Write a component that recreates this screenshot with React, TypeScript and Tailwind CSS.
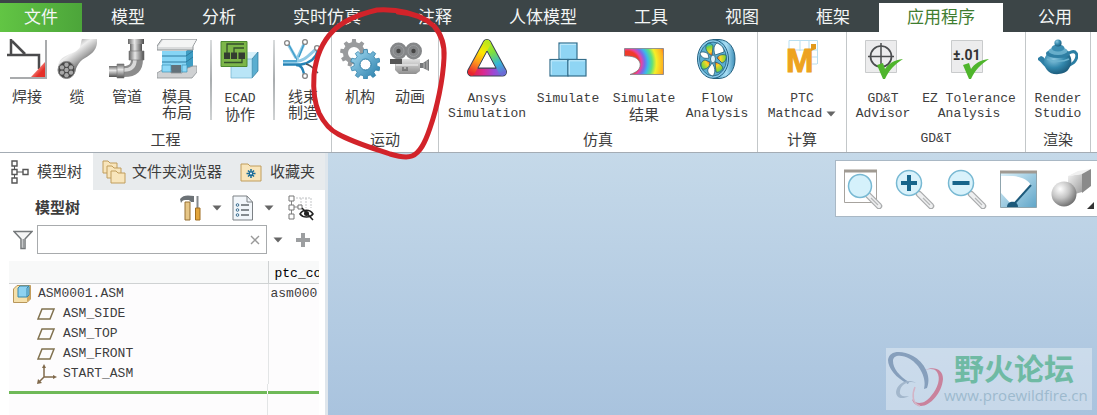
import React from "react";

const Svg = ({ children, className = "size-10", box = "0 0 40 40" }: { children: React.ReactNode; className?: string; box?: string }) => (
  <svg viewBox={box} className={`shrink-0 ${className}`} fill="none" aria-hidden="true">
    {children}
  </svg>
);

const gearPath = (cx: number, cy: number, outer: number, inner: number, teeth: number) => {
  const pts: string[] = [];
  for (let i = 0; i < teeth; i++) {
    const a = (i / teeth) * Math.PI * 2 - Math.PI / 2;
    const s = (Math.PI * 2) / teeth;
    [
      [-0.3, inner],
      [-0.19, outer],
      [0.19, outer],
      [0.3, inner],
    ].forEach(([o, r]) => {
      pts.push(`${(cx + Math.cos(a + o * s) * r).toFixed(2)},${(cy + Math.sin(a + o * s) * r).toFixed(2)}`);
    });
  }
  return `M${pts.join("L")}Z`;
};

const WeldIcon = () => (
  <Svg>
    <defs>
      <linearGradient id="weld" x1="0" y1="0" x2="1" y2="1">
        <stop offset="0.3" stopColor="#f7a49c" />
        <stop offset="0.7" stopColor="#e52f28" />
      </linearGradient>
    </defs>
    <path d="M39 1V39H3" stroke="#a9abad" strokeWidth="2" />
    <path d="M4 0V15M0 16H32V30M5 2L18 15" stroke="#4b4b4d" strokeWidth="2.5" />
    <path d="M24 38L38 23V38Z" fill="url(#weld)" />
  </Svg>
);

const CableIcon = () => (
  <Svg>
    <defs>
      <linearGradient id="cable" x1="0.2" y1="0.1" x2="0.75" y2="0.75">
        <stop stopColor="#777" />
        <stop offset="0.4" stopColor="#eee" />
        <stop offset="0.7" stopColor="#a9a9a9" />
        <stop offset="1" stopColor="#555" />
      </linearGradient>
    </defs>
    <path d="M1 28C2 14 18 17 23 8C24 5 24 2 25 0H40C41 10 35 15 28 19C21 23 19 29 18 34Z" fill="url(#cable)" />
    <circle cx="9.5" cy="31" r="8.5" fill="#474747" stroke="#868686" />
    {[[9.5, 31], [9.5, 25.8], [9.5, 36.2], [5, 28.4], [14, 28.4], [5, 33.6], [14, 33.6]].map(([x, y]) => (
      <circle key={`${x}-${y}`} cx={x} cy={y} r="2.2" fill="#a8a8a8" />
    ))}
  </Svg>
);

const PipeIcon = () => (
  <Svg>
    <defs>
      <linearGradient id="pipeV"><stop stopColor="#666" /><stop offset="0.4" stopColor="#e6e6e6" /><stop offset="1" stopColor="#4e4e4e" /></linearGradient>
      <linearGradient id="pipeH" x1="0" y1="0" x2="0" y2="1"><stop stopColor="#6a6a6a" /><stop offset="0.4" stopColor="#e6e6e6" /><stop offset="1" stopColor="#4e4e4e" /></linearGradient>
    </defs>
    <path d="M23 3H35V13H23Z" fill="url(#pipeV)" />
    <path d="M2 27H12V38H2Z" fill="url(#pipeH)" />
    <path d="M17 27C22 27 24 25 24 20H36C36 32 30 38 17 38Z" fill="#8c8c8c" />
    <path d="M17 31C25 31 28 27 28 20" stroke="#d9d9d9" strokeWidth="3.5" />
    <path d="M21 0H37V5H21Z" fill="url(#pipeV)" />
    <path d="M22 12H37V21H22Z" fill="url(#pipeV)" stroke="#777" strokeWidth="0.6" />
    <path d="M10 25H17V39H10Z" fill="url(#pipeH)" stroke="#777" strokeWidth="0.6" />
  </Svg>
);

const MoldIcon = () => (
  <Svg>
    <path d="M5 12H36V29H31V19H5Z" fill="#4fb0d6" />
    <path d="M5 12H29V34H5Z" fill="#86d5f5" />
    <path d="M29 12L36 7V29L29 34Z" fill="#3e9dc4" />
    <path d="M5 17H29L36 12M5 23H29L36 18" stroke="#2c7ba0" />
    <path d="M14 26H24V34H14Z" fill="#62717a" />
    <path d="M0 7L5 0H40L36 7V11H0Z" fill="#d9dbdc" stroke="#8d9295" />
    <path d="M1 8L6 1H39L35 8Z" fill="#f3f4f4" />
    <path d="M0 34L5 31H14V34H25V31L36 27H40V33L35 39H0Z" fill="#cfd1d3" stroke="#8d9295" strokeWidth="0.8" />
    <path d="M5 26H14V33H5ZM25 26H30V33H25Z" fill="#8ed9f8" stroke="#3e93b8" strokeWidth="0.7" />
  </Svg>
);

const EcadIcon = () => (
  <Svg>
    <path d="M11 20L18 13H38L32 20Z" fill="#d8f1fb" />
    <path d="M32 20L38 13V32L32 39Z" fill="#5aaed0" stroke="#2c7798" strokeWidth="0.7" />
    <path d="M11 20H32V39H11Z" fill="#b9e5f7" stroke="#6db0cb" strokeWidth="0.7" />
    <path d="M1 2.5H27V27.5H1Z" fill="#7cb648" stroke="#4d8a30" />
    <path d="M4 13.5H10V20H4ZM11 13.5H17V20H11ZM18.5 13.5H25V20H18.5Z" fill="#333c30" />
    <path d="M7 14V5H24M14 14V9H24M4 23.5H22V20" stroke="#34502c" strokeWidth="1.3" />
  </Svg>
);

const HarnessIcon = () => (
  <Svg>
    <path d="M0 22.5H13C21 22 25 17 33 10M5 5L13 19M21 5L14 20" stroke="#8fcae6" strokeWidth="3" />
    <path d="M0 25.5H18C27 24 33 19 35 11M13 26C19 26 20 31 21 35" stroke="#2583b5" strokeWidth="2.5" />
    <path d="M6 6L14 21M21 5L16 18M0 22H14" stroke="#3c9cca" strokeWidth="1.3" />
    <path d="M23 25C28 26 30 29 35 34" stroke="#555" strokeWidth="1.5" />
    {[[4, 4], [22, 3], [34, 9], [22, 37]].map(([x, y]) => (
      <circle key={x + y} cx={x} cy={y} r="2.4" fill="#fff" stroke="#888" strokeWidth="1.4" />
    ))}
  </Svg>
);

const GearsIcon = () => (
  <Svg>
    <defs>
      <linearGradient id="gear" x1="0" y1="0" x2="1" y2="1"><stop stopColor="#a7dcf3" /><stop offset="1" stopColor="#247ba8" /></linearGradient>
    </defs>
    <path fillRule="evenodd" d={`${gearPath(14, 14, 14, 11, 9)}M14 8A6 6 0 1 0 14 20A6 6 0 1 0 14 8Z`} fill="#999b9d" />
    <path d={gearPath(25.5, 25.5, 15, 11.5, 10)} fill="url(#gear)" stroke="#2b7ca6" strokeWidth="0.7" />
    <circle cx="25.5" cy="25.5" r="5.5" fill="#fff" stroke="#2b7ca6" />
  </Svg>
);

const CameraIcon = () => (
  <Svg>
    <defs>
      <linearGradient id="cam" x1="0" y1="0" x2="0" y2="1"><stop stopColor="#e3e3e3" /><stop offset="1" stopColor="#8f8f8f" /></linearGradient>
    </defs>
    <path d="M5 20H30V32L26 35H9L5 31Z" fill="url(#cam)" />
    <circle cx="8.5" cy="12" r="8.5" fill="#858789" />
    <circle cx="23.5" cy="12" r="8.5" fill="#858789" />
    <circle cx="8.5" cy="12" r="5.5" stroke="#9b9d9f" />
    <circle cx="23.5" cy="12" r="5.5" stroke="#9b9d9f" />
    <circle cx="8.5" cy="12" r="2.2" fill="#444" />
    <circle cx="23.5" cy="12" r="2.2" fill="#444" />
    <path d="M0 20H12V25H0Z" fill="#555" />
    <path d="M30 24H33L39 20V32L33 29H30Z" fill="#77797b" />
    <path d="M34 24V29M37 22V31" stroke="#bbb" />
    <path d="M12 29H14M16 29H18M12 31H18" stroke="#4f4f4f" />
    <path d="M6 26H28" stroke="#f4f4f4" />
  </Svg>
);

const AnsysIcon = () => (
  <Svg>
    <defs>
      <linearGradient id="anL" gradientUnits="userSpaceOnUse" x1="20" y1="2" x2="4" y2="34"><stop stopColor="#b5e61d" /><stop offset="0.35" stopColor="#ffe800" /><stop offset="0.65" stopColor="#ff9a1c" /><stop offset="1" stopColor="#e8242f" /></linearGradient>
      <linearGradient id="anR" gradientUnits="userSpaceOnUse" x1="20" y1="2" x2="36" y2="34"><stop stopColor="#c4ec1b" /><stop offset="0.35" stopColor="#7fe03c" /><stop offset="0.7" stopColor="#35b6d8" /><stop offset="1" stopColor="#6b6bd5" /></linearGradient>
      <linearGradient id="anB" gradientUnits="userSpaceOnUse" x1="3" y1="34" x2="37" y2="34"><stop stopColor="#e5232e" /><stop offset="0.4" stopColor="#d92a92" /><stop offset="0.7" stopColor="#9c49d6" /><stop offset="1" stopColor="#5f78dc" /></linearGradient>
    </defs>
    <path d="M20 4.5L4.5 33H35.5Z" stroke="#3c4354" strokeWidth="9" strokeLinejoin="round" />
    <path d="M4.5 33H35.5" stroke="url(#anB)" strokeWidth="7" strokeLinecap="round" />
    <path d="M20 4.5L35.5 33" stroke="url(#anR)" strokeWidth="7" strokeLinecap="round" />
    <path d="M20 4.5L4.5 33" stroke="url(#anL)" strokeWidth="7" strokeLinecap="round" />
    <path d="M20 12L11 29H29Z" fill="#fff" stroke="#3c4354" />
  </Svg>
);

const SimulateIcon = () => (
  <Svg>
    {[[11, 4], [2, 20.5], [20, 20.5]].map(([x, y]) => (
      <g key={x}>
        <rect x={x} y={y} width="18" height="16.5" fill="#8fd5f4" stroke="#356e8b" strokeWidth="1.2" />
        <path d={`M${x + 1.2} ${y + 15}V${y + 1.3}H${x + 17}`} stroke="#c8edfc" />
      </g>
    ))}
  </Svg>
);

const ResultIcon = () => (
  <Svg>
    <defs>
      <radialGradient id="res" gradientUnits="userSpaceOnUse" cx="3" cy="24" r="42">
        <stop offset="0.28" stopColor="#f03a2a" /><stop offset="0.34" stopColor="#e844a0" /><stop offset="0.42" stopColor="#7a6be8" /><stop offset="0.5" stopColor="#3bb9ea" /><stop offset="0.6" stopColor="#5fe07c" /><stop offset="0.7" stopColor="#f4ef28" /><stop offset="0.86" stopColor="#ffb020" /><stop offset="1" stopColor="#ee3124" />
      </radialGradient>
    </defs>
    <path d="M0.5 9.5H39.5V35.5H6C14 33 17 29 16 24C14 18 8 17 0.5 17Z" fill="url(#res)" stroke="#7e8088" strokeWidth="0.8" />
  </Svg>
);

const FlowIcon = () => (
  <Svg>
    <defs>
      <linearGradient id="ring"><stop stopColor="#4aa7d0" /><stop offset="0.6" stopColor="#a9def5" /><stop offset="1" stopColor="#3e8fb8" /></linearGradient>
      <radialGradient id="blade" gradientUnits="userSpaceOnUse" cx="16" cy="20" r="15"><stop offset="0.25" stopColor="#ee4a1c" /><stop offset="0.5" stopColor="#ffd426" /><stop offset="0.85" stopColor="#7ed63c" /><stop offset="1" stopColor="#34b3c6" /></radialGradient>
    </defs>
    <path d="M16 0.5H22C32 1 38 9 38 20S32 39 22 39.5H16Z" fill="url(#ring)" stroke="#24607f" />
    <ellipse cx="16" cy="20" rx="15.5" ry="19.3" fill="#8accec" stroke="#24607f" />
    <ellipse cx="16" cy="20" rx="13.5" ry="17" fill="#5aaed0" stroke="#24607f" strokeWidth="0.8" />
    <g stroke="#245d75" strokeWidth="0.8" strokeLinejoin="round">
      <path d="M15 17C10 14 7 9 10 5C13 3 15 5 16 7Z" fill="url(#blade)" />
      <path d="M18 16C16 10 17 6 20 4C25 6 27 9 27 13Z" fill="#fff" />
      <path d="M20 19C21 16 25 15 29 16C30 20 28 23 25 24Z" fill="url(#blade)" />
      <path d="M18 23C22 24 25 26 26 29C24 33 21 34 19 33Z" fill="url(#blade)" />
      <path d="M15 24C18 28 19 33 16 37C12 36 10 33 11 30Z" fill="#fff" />
      <path d="M13 23C13 28 9 31 5 30C3 26 4 22 8 21Z" fill="url(#blade)" />
      <path d="M12 19C8 20 4 19 3 14C5 12 9 13 11 15Z" fill="#fff" />
      <ellipse cx="16" cy="20" rx="2.5" ry="4" fill="#dff3fb" />
    </g>
  </Svg>
);

const MathcadIcon = () => (
  <Svg>
    <path d="M7 10V1.500H35.500V25M18 1V12M27 1V12M7 11H36M35 25H26V11M26 18H36" stroke="#b9dff0" />
    <text x="4" y="33" fontFamily="Liberation Sans Narrow, Liberation Sans, sans-serif" fontWeight="700" fontSize="33" fill="#eda320" stroke="#eda320">M</text>
    <path d="M29 5H34V10L29 12Z" fill="#e29a1d" />
  </Svg>
);

const Check = () => <path d="M14 26L20 24L22 30C25 25 31 21 40 20C32 25 26 31 22 40H20Z" fill="#4fb52c" />;

const GdtIcon = () => (
  <Svg>
    <path d="M2.5 1.5H33.5V33.5H2.5Z" fill="#ececed" stroke="#c9cbcc" />
    <circle cx="18" cy="17.5" r="10.5" stroke="#4b4d4f" strokeWidth="1.7" />
    <path d="M18 4V31M5 17.5H31" stroke="#4b4d4f" strokeWidth="1.5" />
    <Check />
  </Svg>
);

const ToleranceIcon = () => (
  <Svg>
    <path d="M2.5 1.5H33.5V33.5H2.5Z" fill="#ececed" stroke="#c9cbcc" />
    <text x="4" y="21" fontFamily="Roboto, sans-serif" fontWeight="700" fontSize="14" fill="#333">±.01</text>
    <Check />
  </Svg>
);

const TeapotIcon = () => (
  <Svg>
    <defs>
      <radialGradient id="pot" cx="0.35" cy="0.3" r="0.8"><stop stopColor="#8ac6df" /><stop offset="0.5" stopColor="#3287ac" /><stop offset="1" stopColor="#17506f" /></radialGradient>
    </defs>
    <path d="M31 14C38 10 41 16 37 22C35 25 32 26 29 27" stroke="#2b7ea3" strokeWidth="3" />
    <path d="M0 19L3 17C7 18 6 21 11 21V30C5 28 4 23 0 21Z" fill="#2f7fa5" />
    <path d="M10 14H30C35 19 34 26 30 31C26 36 13 37 9 31C5 26 5 19 10 14Z" fill="url(#pot)" />
    <ellipse cx="20" cy="14.5" rx="12" ry="4.5" fill="#2f7fa4" />
    <ellipse cx="20" cy="12" rx="9.5" ry="4" fill="#67aecb" />
    <ellipse cx="20" cy="9" rx="6.5" ry="3.5" fill="#3b8db1" />
    <circle cx="20" cy="4" r="3.6" fill="url(#pot)" />
    <path d="M9 20C15 23 25 23 31 20" stroke="#6bb2ce" strokeWidth="1.5" />
  </Svg>
);

const Caret = () => (
  <svg viewBox="0 0 10 6" className="h-1.5 w-2.5 shrink-0" aria-hidden="true">
    <path d="M0.5 0.5H9.5L5 5.5Z" fill="#666" />
  </svg>
);

const Handle = () => (
  <>
    <path d="M24 25L36 37" stroke="#a9abac" strokeWidth="6.5" strokeLinecap="round" />
    <path d="M24 25L36 37" stroke="#eeeff0" strokeWidth="4" strokeLinecap="round" />
    <path d="M28 29L35 36" stroke="#b5b7b8" strokeWidth="1.2" />
  </>
);

const ZoomFitIcon = () => (
  <Svg>
    <path d="M1.5 1.5H33.5V33.5H1.5Z" fill="#fff" stroke="#a7a39e" />
    <path d="M1 2H34" stroke="#a09a92" strokeWidth="3" />
    <Handle />
    <circle cx="17" cy="17" r="11.5" fill="#d5f1fb" stroke="#78b9d3" strokeWidth="1.5" />
  </Svg>
);
const ZoomInIcon = () => (
  <Svg>
    <Handle />
    <circle cx="14" cy="14" r="12.5" fill="#d9f2fb" stroke="#78b9d3" strokeWidth="1.5" />
    <path d="M6 14H22M14 6V22" stroke="#17658b" strokeWidth="4" />
  </Svg>
);
const ZoomOutIcon = () => (
  <Svg>
    <Handle />
    <circle cx="14" cy="14" r="12.5" fill="#d9f2fb" stroke="#78b9d3" strokeWidth="1.5" />
    <path d="M5.5 14H22.5" stroke="#17658b" strokeWidth="4" />
  </Svg>
);
const RepaintIcon = () => (
  <Svg>
    <defs>
      <linearGradient id="rep" x1="0" y1="0" x2="1" y2="1"><stop stopColor="#dff3fb" /><stop offset="1" stopColor="#5fa5c8" /></linearGradient>
    </defs>
    <path d="M1.5 2.5H37.5V38.5H1.5Z" fill="url(#rep)" stroke="#8fa5ae" />
    <path d="M2 7H14C23 8 29 11 32 16L13 36L2 24Z" fill="#fff" />
    <path d="M1 3H38" stroke="#a09a92" strokeWidth="3" />
    <path d="M32 16L15 35" stroke="#1d5a7b" strokeWidth="2" />
    <path d="M8 38C8 31 19 31 19 38Z" fill="#1d5a7b" />
  </Svg>
);
const ShadeIcon = () => (
  <Svg className="size-11" box="0 0 44 44">
    <defs>
      <radialGradient id="ball" cx="0.35" cy="0.3" r="0.75"><stop stopColor="#fff" /><stop offset="0.5" stopColor="#c4c4c4" /><stop offset="1" stopColor="#6b6b6b" /></radialGradient>
      <linearGradient id="cubeS" x1="0" y1="0" x2="1" y2="1"><stop stopColor="#f2f2f2" /><stop offset="1" stopColor="#9c9c9c" /></linearGradient>
    </defs>
    <path d="M17 9L31 7V25L24 27L17 19Z" fill="url(#cubeS)" />
    <path d="M17 9L27 4L40 2L31 7Z" fill="#f0f0f0" />
    <path d="M31 7L40 2V19L31 26Z" fill="#8a8a8a" />
    <circle cx="13" cy="27" r="12.5" fill="url(#ball)" />
    <path d="M43 35V42H36Z" fill="#333" />
  </Svg>
);

type Tool = { lines: string[]; icon: () => React.JSX.Element; width: string; caret?: boolean; rule?: boolean };
type Group = { title: string; pad: string; tools: Tool[] };

const groups: Group[] = [
  {
    title: "工程",
    pad: "pl-0.5 pr-[3px]",
    tools: [
      { lines: ["焊接"], icon: WeldIcon, width: "w-[50px]" },
      { lines: ["缆"], icon: CableIcon, width: "w-[50px]" },
      { lines: ["管道"], icon: PipeIcon, width: "w-[50px]" },
      { lines: ["模具", "布局"], icon: MoldIcon, width: "w-[50px]" },
      { lines: ["ECAD", "协作"], icon: EcadIcon, width: "w-[50px]", rule: true },
      { lines: ["线束", "制造"], icon: HarnessIcon, width: "w-[50px]", rule: true },
    ],
  },
  {
    title: "运动",
    pad: "px-[3px]",
    tools: [
      { lines: ["机构"], icon: GearsIcon, width: "w-[50px]" },
      { lines: ["动画"], icon: CameraIcon, width: "w-[50px]" },
    ],
  },
  {
    title: "仿真",
    pad: "pl-[7px] pr-[3px]",
    tools: [
      { lines: ["Ansys", "Simulation"], icon: AnsysIcon, width: "w-[82px]" },
      { lines: ["Simulate"], icon: SimulateIcon, width: "w-[80px]" },
      { lines: ["Simulate", "结果"], icon: ResultIcon, width: "w-[72px]" },
      { lines: ["Flow", "Analysis"], icon: FlowIcon, width: "w-[74px]" },
    ],
  },
  { title: "计算", pad: "px-1", tools: [{ lines: ["PTC", "Mathcad"], icon: MathcadIcon, width: "w-[80px]", caret: true }] },
  {
    title: "GD&T",
    pad: "px-[3px]",
    tools: [
      { lines: ["GD&T", "Advisor"], icon: GdtIcon, width: "w-[66px]" },
      { lines: ["EZ Tolerance", "Analysis"], icon: ToleranceIcon, width: "w-[106px]" },
    ],
  },
  { title: "渲染", pad: "px-0.5", tools: [{ lines: ["Render", "Studio"], icon: TeapotIcon, width: "w-[60px]" }] },
];

const isLatin = (s: string) => /^[\x20-\x7e]+$/.test(s);
const labelFont = (s: string) => (isLatin(s) ? "font-['Liberation_Mono',monospace] text-[13px]" : "text-[15px]");

const RibbonButton = ({ tool }: { tool: Tool }) => {
  const Icon = tool.icon;
  return (
    <>
      {tool.rule && <span className="mt-2 ml-2 mr-[3px] h-20 w-0.5 shrink-0 bg-linear-to-b from-[#d9dcdd] via-[#a9adaf] to-[#d0d3d4]" />}
      <button className={`flex shrink-0 flex-col items-center pt-[7px] ${tool.width}`}>
        <Icon />
        <span className={`flex flex-col items-center ${isLatin(tool.lines[0]) ? "pt-3" : "pt-[9px]"}`}>
          {tool.lines.map((line, i) => (
            <span key={line} className={`flex items-center gap-1 whitespace-nowrap ${isLatin(line) ? "leading-[15px]" : "leading-4"} ${labelFont(line)}`}>
              {line}
              {tool.caret && i === 1 && <Caret />}
            </span>
          ))}
        </span>
      </button>
    </>
  );
};

const menuTabs = ["模型", "分析", "实时仿真", "注释", "人体模型", "工具", "视图", "框架", "应用程序", "公用"];

const TreeTabIcon = () => (
  <Svg className="h-6 w-[18px]" box="0 0 18 24">
    <path d="M3.5 6V18M6 12H12" stroke="#555" />
    <path d="M1 1H6V6H1ZM1 9.5H6V14.5H1ZM1 18H6V23H1ZM12 9.5H17V14.5H12Z" fill="#fff" stroke="#555" strokeWidth="1.4" />
  </Svg>
);
const FoldersIcon = () => (
  <Svg className="size-6" box="0 0 24 24">
    {[[0, 0], [4, 5], [8, 10]].map(([x, y]) => (
      <path key={x} d={`M${x + 1} ${y + 1}H${x + 6}L${x + 8} ${y + 3}H${x + 15}V${y + 13}H${x + 1}Z`} fill="#f8e5bb" stroke="#c09d5c" strokeLinejoin="round" />
    ))}
  </Svg>
);
const FavoritesIcon = () => (
  <Svg className="size-[22px]" box="0 0 22 22">
    <path d="M1 3H8L10 5H21V20H1Z" fill="#f8e5bb" stroke="#c09d5c" strokeLinejoin="round" />
    <path d="M11 8V17M6.5 12.5H15.5M8 9.5L14 15.5M14 9.5L8 15.5" stroke="#1a6c98" strokeWidth="1.5" />
    <circle cx="11" cy="12.5" r="1" fill="#fff" />
  </Svg>
);
const HammerIcon = () => (
  <Svg className="h-[26px] w-[22px]" box="0 0 22 26">
    <path d="M0 4C3 0 7 0 14 1V7H11L9 5H5C3 5 2 6 1 8Z" fill="#6c7276" />
    <path d="M5 7H10V25H5Z" fill="#e6c687" stroke="#967035" />
    <path d="M17.5 1V13" stroke="#85898c" strokeWidth="2" />
    <path d="M15.5 13H20V25H15.5Z" fill="#e2a53c" stroke="#a06d20" />
  </Svg>
);
const ListIcon = () => (
  <Svg className="h-[26px] w-[22px]" box="0 0 22 26">
    <path d="M1 1H15L20.5 7V25H1Z" fill="#f2f6fa" stroke="#7c8185" />
    <path d="M15 1V7H20.5" stroke="#7c8185" />
    <path d="M9 10H17M9 15H17M9 20H17" stroke="#62686c" strokeWidth="1.5" />
    {[10, 15, 20].map((y) => <circle key={y} cx="5.5" cy={y} r="1.3" stroke="#3c6f91" />)}
  </Svg>
);
const HiddenTreeIcon = () => (
  <Svg className="size-[26px]" box="0 0 26 26">
    <path d="M8 3H23V13M13 3V13M18 3V13" stroke="#c3c5c7" strokeDasharray="2 1" />
    <path d="M3.5 6V19M6 12H11" stroke="#888" />
    <path d="M1 1H6V6H1ZM1 10H6V15H1ZM1 19H6V24H1ZM10 10H14V14H10Z" fill="#fff" stroke="#777" />
    <path d="M12 19C15 14 22 14 25 19C22 23 15 23 12 19Z" fill="#fff" stroke="#222" strokeWidth="1.5" />
    <circle cx="18.5" cy="18.5" r="2.5" fill="#222" />
    <path d="M14 13L25 25" stroke="#222" strokeWidth="1.5" />
  </Svg>
);
const FilterIcon = () => (
  <Svg className="size-5" box="0 0 20 20">
    <path d="M1 1.5H19L12 9V18.5H8V9Z" fill="#f4f5f5" stroke="#74787a" strokeWidth="1.5" />
    <path d="M10.5 9V18" stroke="#9a9d9f" strokeWidth="2" />
  </Svg>
);
const AssemblyIcon = () => (
  <Svg className="size-[18px]" box="0 0 18 18">
    <path d="M0.5 4L4 0.5H17.5V14L14 17.5H0.5Z" fill="#f5e0ab" stroke="#b8965a" />
    <path d="M14 17L17.5 14V1L14 4Z" fill="#cfa862" />
    <path d="M5 3L7 1H16V10L14 12H5Z" fill="#8ed2f1" stroke="#3b88ab" />
    <path d="M14 12V3L16 1" stroke="#3b88ab" />
  </Svg>
);
const PlaneIcon = () => (
  <Svg className="h-3 w-[18px]" box="0 0 18 12">
    <path d="M5 1H17L13 11H1Z" stroke="#80714f" strokeWidth="1.5" />
  </Svg>
);
const CsysIcon = () => (
  <Svg className="size-5" box="0 0 20 20">
    <path d="M7 2V13H18M7 13L2 18" stroke="#80694b" strokeWidth="1.5" />
    <path d="M7 0L9 4H5ZM20 13L16 11V15ZM0 20L1 15L5 19Z" fill="#80694b" />
  </Svg>
);

const nodes = [
  { name: "ASM_SIDE", icon: PlaneIcon },
  { name: "ASM_TOP", icon: PlaneIcon },
  { name: "ASM_FRONT", icon: PlaneIcon },
  { name: "START_ASM", icon: CsysIcon },
];

const ModelTree = () => (
  <aside className="flex w-[328px] shrink-0 flex-col border-r-3 border-[#dfe6ec] bg-white">
    <nav className="flex h-[37px] shrink-0 bg-[#e8ebed] text-[15px] whitespace-nowrap">
      <button className="flex items-center gap-2 bg-white px-[11px]"><TreeTabIcon />模型树</button>
      <button className="flex items-center gap-1.5 pl-[9px]"><FoldersIcon />文件夹浏览器</button>
      <button className="flex items-center gap-2 pl-[18px]"><FavoritesIcon />收藏夹</button>
    </nav>
    <div className="flex h-[35px] shrink-0 items-center pr-[11px] pl-[35px]">
      <h2 className="flex-1 text-[15px] font-bold">模型树</h2>
      <button aria-label="设置" className="flex items-center gap-2.5"><HammerIcon /><Caret /></button>
      <button aria-label="显示" className="ml-2.5 flex items-center gap-2.5"><ListIcon /><Caret /></button>
      <button aria-label="树列" className="ml-3.5"><HiddenTreeIcon /></button>
    </div>
    <div className="flex h-[29px] shrink-0 items-center pr-[15px] pl-[13px]">
      <FilterIcon />
      <div className="ml-1 flex h-full flex-1 items-center border border-[#a8abad] bg-white pr-1.5">
        <input aria-label="筛选" className="h-full min-w-0 flex-1 px-2 text-[15px] outline-none" />
        <button aria-label="清除">
          <svg viewBox="0 0 10 10" className="size-2.5"><path d="M1 1L9 9M9 1L1 9" stroke="#999" strokeWidth="1.4" /></svg>
        </button>
      </div>
      <button aria-label="筛选选项" className="ml-1.5"><Caret /></button>
      <button aria-label="添加" className="ml-[13px]">
        <svg viewBox="0 0 14 14" className="size-3.5"><path d="M7 0V14M0 7H14" stroke="#9c9ea0" strokeWidth="4" /></svg>
      </button>
    </div>
    <div className="mt-[7px] mr-1.5 ml-[9px] flex flex-1 flex-col overflow-hidden bg-[#fdfcfd]">
      <table className="w-full table-fixed border-collapse font-['Liberation_Mono',monospace] text-[13px] leading-4 whitespace-nowrap">
        <colgroup><col /><col className="w-[51px]" /></colgroup>
        <thead>
          <tr className="h-[22px] border-b border-[#cfd2d3] bg-[#f8f9f9]">
            <th aria-label="名称" className="border-r border-[#cfd2d3] p-0" />
            <th scope="col" className="overflow-hidden p-0 pt-1 pl-1.5 text-left font-normal text-black">ptc_common</th>
          </tr>
        </thead>
        <tbody>
          <tr className="h-5">
            <td className="border-r border-[#e3e5e6] p-0"><span className="flex h-5 items-center gap-[7px] pl-1"><AssemblyIcon />ASM0001.ASM</span></td>
            <td className="overflow-hidden p-0 pl-0.5">asm000</td>
          </tr>
          {nodes.map(({ name, icon: Icon }) => (
            <tr key={name} className="h-5">
              <td className="border-r border-[#e3e5e6] p-0">
                <span className="flex h-5 items-center pl-7"><span className="flex w-[26px]"><Icon /></span>{name}</span>
              </td>
              <td className="p-0" />
            </tr>
          ))}
        </tbody>
      </table>
      <div className="mr-[51px] h-[7px] shrink-0 border-r border-[#e3e5e6]" />
      <div className="flex h-[3px] shrink-0 gap-px">
        <span className="flex-1 bg-[#6fb958]" />
        <span className="w-[51px] bg-[#6fb958]" />
      </div>
      <div className="mr-[51px] flex-1 border-r border-[#e3e5e6]" />
    </div>
  </aside>
);

const viewTools = [
  { name: "重新调整", icon: ZoomFitIcon },
  { name: "放大", icon: ZoomInIcon },
  { name: "缩小", icon: ZoomOutIcon },
  { name: "重画", icon: RepaintIcon },
  { name: "显示样式", icon: ShadeIcon },
];

const Watermark = () => (
  <div className="mr-[5px] mb-[5px] flex h-[62px] w-[206px] items-center bg-white/35">
    <svg viewBox="0 0 56 58" className="ml-0.5 h-[58px] w-14 shrink-0" fill="none" aria-hidden="true">
      <path fillRule="evenodd" d="M20 34C8 28 0 18 0 10C1 0 14 0 25 6C36 12 44 26 39 38L36 39C39 29 32 15 22 9C13 4 5 5 5 11C5 18 11 26 21 32Z" fill="#869fbc" />
      <path d="M37 20C46 16 55 19 55 29C54 43 42 56 33 56C28 56 25 53 24 49C29 56 38 53 43 46C50 38 53 28 49 22C46 18 41 19 37 20Z" fill="#c9829c" />
      <path d="M32 56C24 54 24 44 27 37" stroke="#d3b4c6" strokeWidth="1.5" />
      <path d="M28 33C20 28 9 33 8 42C8 48 14 50 21 46C14 47 11 45 12 41C13 34 21 30 28 33Z" fill="#a3b7cc" />
    </svg>
    <div className="flex flex-col whitespace-nowrap">
      <span className="pl-2.5 text-[30px] leading-8 font-bold text-[#6fbaa4]">野火论坛</span>
      <a href="#site" className="font-['Open_Sans',sans-serif] text-[15px] leading-6 text-[#9dbace]">www.proewildfire.cn</a>
    </div>
  </div>
);

export default function App() {
  return (
    <div className="relative flex min-h-screen flex-col overflow-hidden bg-white font-['Noto_Sans_CJK_SC',sans-serif] text-[#3d3d3d]">
      <nav className="flex h-8 shrink-0 gap-px overflow-hidden bg-[#3c4547] pt-[3px] text-[17px] leading-6 whitespace-nowrap text-[#f3f5f5]">
        <button className="w-[82px] shrink-0 bg-linear-to-r from-[#62c544] to-[#4ca53a] pb-1">文件</button>
        {menuTabs.map((tab) => (
          <button key={tab} className={`shrink-0 px-7 pb-1 ${tab === "应用程序" ? "bg-white text-[#3f7d2f]" : ""} ${tab === "公用" ? "ml-1.5" : ""}`}>
            {tab}
          </button>
        ))}
      </nav>

      <div className="flex h-[121px] shrink-0 overflow-hidden border-b border-[#a4acb4] bg-white">
        {groups.map((group) => (
          <section key={group.title} className="flex shrink-0 flex-col border-r border-[#c3c7c9]">
            <div className={`flex h-[99px] ${group.pad}`}>
              {group.tools.map((tool) => <RibbonButton key={tool.lines.join()} tool={tool} />)}
            </div>
            <h3 className={`text-center leading-4 ${labelFont(group.title)}`}>{group.title}</h3>
          </section>
        ))}
      </div>

      <div className="flex flex-1">
        <ModelTree />
        <main className="flex min-w-0 flex-1 flex-col items-end justify-between bg-linear-to-b from-[#c5d9e9] to-[#a9c3de]">
          <div className="mt-[7px] flex h-[57px] items-center gap-3 border border-r-0 border-[#a9b8c5] bg-white pr-0.5 pl-[7px]">
            {viewTools.map(({ name, icon: Icon }) => (
              <button key={name} aria-label={name}><Icon /></button>
            ))}
          </div>
          <Watermark />
        </main>
      </div>

      <svg viewBox="308 4 140 160" className="pointer-events-none absolute top-1 left-[308px] h-[160px] w-[140px]" fill="none" aria-hidden="true">
        <path d="M428 21C412 12 394 9 377 10C360 14 344 20 333 31C322 42 316 56 314 75C313 90 315 104 319 113C323 121 330 130 338 134C352 142 372 148 390 154C400 157 407 158 412 156C420 153 425 143 430 128C437 108 443 80 444 58C445 44 441 34 434 26C424 17 410 13 398 12" stroke="#d2232a" strokeWidth="5" strokeLinecap="round" strokeLinejoin="round" />
      </svg>
    </div>
  );
}
